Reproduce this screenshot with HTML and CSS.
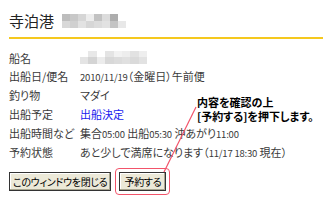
FILE: index.html
```html
<!DOCTYPE html>
<html lang="ja">
<head>
  <meta charset="UTF-8">
  <title>予約確認</title>
  <link rel="stylesheet" href="styles.css">
</head>
<body>

  <div class="caixa">
    <h1 class="titulo">寺泊港 <span class="mosaico m-titulo">
      <i style="background:#bdbdbd"></i><i style="background:#c8c8c8"></i><i style="background:#d6d6d6"></i><i style="background:#ededed"></i><i style="background:#c2c2c2"></i><i style="background:#dcdcdc"></i><i style="background:#adadad"></i><i style="background:#fff"></i>
      <i style="background:#d8d8d8"></i><i style="background:#d0d0d0"></i><i style="background:#e2e2e2"></i><i style="background:#d6d6d6"></i><i style="background:#dcdcdc"></i><i style="background:#e2e2e2"></i><i style="background:#c4c4c4"></i><i style="background:#e8e8e8"></i>
    </span></h1>

    <div class="dados">
      <div class="linha primeira">
        <span class="rotulo">船名</span>
        <span class="mosaico m-nome">
          <i style="background:#fff"></i><i style="background:#e8e8e8"></i><i style="background:#fff"></i><i style="background:#e4e4e4"></i><i style="background:#f2f2f2"></i><i style="background:#ededed"></i><i style="background:#e2e2e2"></i><i style="background:#eeeeee"></i>
          <i style="background:#e4e4e4"></i><i style="background:#d4d4d4"></i><i style="background:#ececec"></i><i style="background:#d8d8d8"></i><i style="background:#dcdcdc"></i><i style="background:#e0e0e0"></i><i style="background:#dadada"></i><i style="background:#e2e2e2"></i>
        </span>
      </div>
      <div class="linha"><span class="rotulo">出船日/便名</span><span><span class="num">2010/11/19</span>（金曜日）午前便</span></div>
      <div class="linha"><span class="rotulo">釣り物</span><span>マダイ</span></div>
      <div class="linha"><span class="rotulo">出船予定</span><span class="decidido">出船決定</span></div>
      <div class="linha"><span class="rotulo">出船時間など</span><span>集合<span class="num">05:00</span> 出船<span class="num">05:30</span> 沖あがり<span class="num">11:00</span></span></div>
      <div class="linha"><span class="rotulo">予約状態</span><span>あと少しで満席になります（<span class="num">11/17 18:30</span> 現在）</span></div>
    </div>

    <div class="botoes">
      <button class="btn">このウィンドウを閉じる</button>
      <span class="destaque"><button class="btn">予約する</button></span>
    </div>

    <!-- 吹き出し -->
    <div class="nota">内容を確認の上<br>[予約する]を押下します。</div>
    <svg class="seta" width="40" height="70" viewBox="0 0 40 70">
      <line x1="35" y1="1" x2="3" y2="66" stroke="#f2546a" stroke-width="1.2"/>
    </svg>
  </div>

</body>
</html>
```

FILE: styles.css
```css
body {
  margin: 0;
  background: #fff;
  font-family: "Noto Sans CJK JP", "Noto Sans", sans-serif;
  font-size: 11px;
  color: #3a3a3a;
  font-feature-settings: "palt";
}
.caixa {
  position: relative;
  padding: 11px 1px 0 9px;
}
.titulo {
  margin: 0;
  font-size: 15px;
  font-weight: normal;
  color: #222;
  line-height: 20px;
  padding-bottom: 6px;
  border-bottom: 2px solid #f5c81e;
  display: flex;
  align-items: center;
}
.mosaico {
  display: inline-grid;
  grid-template-columns: repeat(8, 1fr);
}
.mosaico i {
  display: block;
}
.m-titulo {
  margin-left: 8px;
  width: 64px;
  height: 14px;
  grid-template-rows: 7px 7px;
}
.m-nome {
  width: 67px;
  height: 13px;
  grid-template-rows: 6px 7px;
}
.dados {
  margin-top: 10px;
}
.linha {
  display: flex;
  align-items: center;
  height: 19px;
  white-space: nowrap;
}
.linha.primeira {
  height: 17px;
}
.rotulo {
  width: 71px;
  flex-shrink: 0;
}
.num {
  font-size: 9.5px;
  letter-spacing: -0.2px;
}
.decidido {
  color: #1a1aee;
}
.botoes {
  margin-top: 7px;
  display: flex;
  align-items: center;
  gap: 4px;
}
.btn {
  font-family: inherit;
  font-feature-settings: "palt";
  font-size: 10px;
  letter-spacing: -0.3px;
  color: #000;
  background: #ece9d8;
  border: 1px solid #333;
  box-shadow: inset -1px -1px 0 #a9a690, inset 1px 1px 0 #fff;
  padding: 0 3px;
  height: 19px;
  line-height: 17px;
}
.destaque .btn {
  padding: 0 4px;
}
.destaque {
  display: inline-block;
  border: 1px solid #f2546a;
  border-radius: 4px;
  padding: 3px;
}
.nota {
  position: absolute;
  left: 197px;
  top: 95px;
  font-weight: bold;
  color: #000;
  line-height: 14px;
  white-space: nowrap;
}
.seta {
  position: absolute;
  left: 161px;
  top: 106px;
}
```
